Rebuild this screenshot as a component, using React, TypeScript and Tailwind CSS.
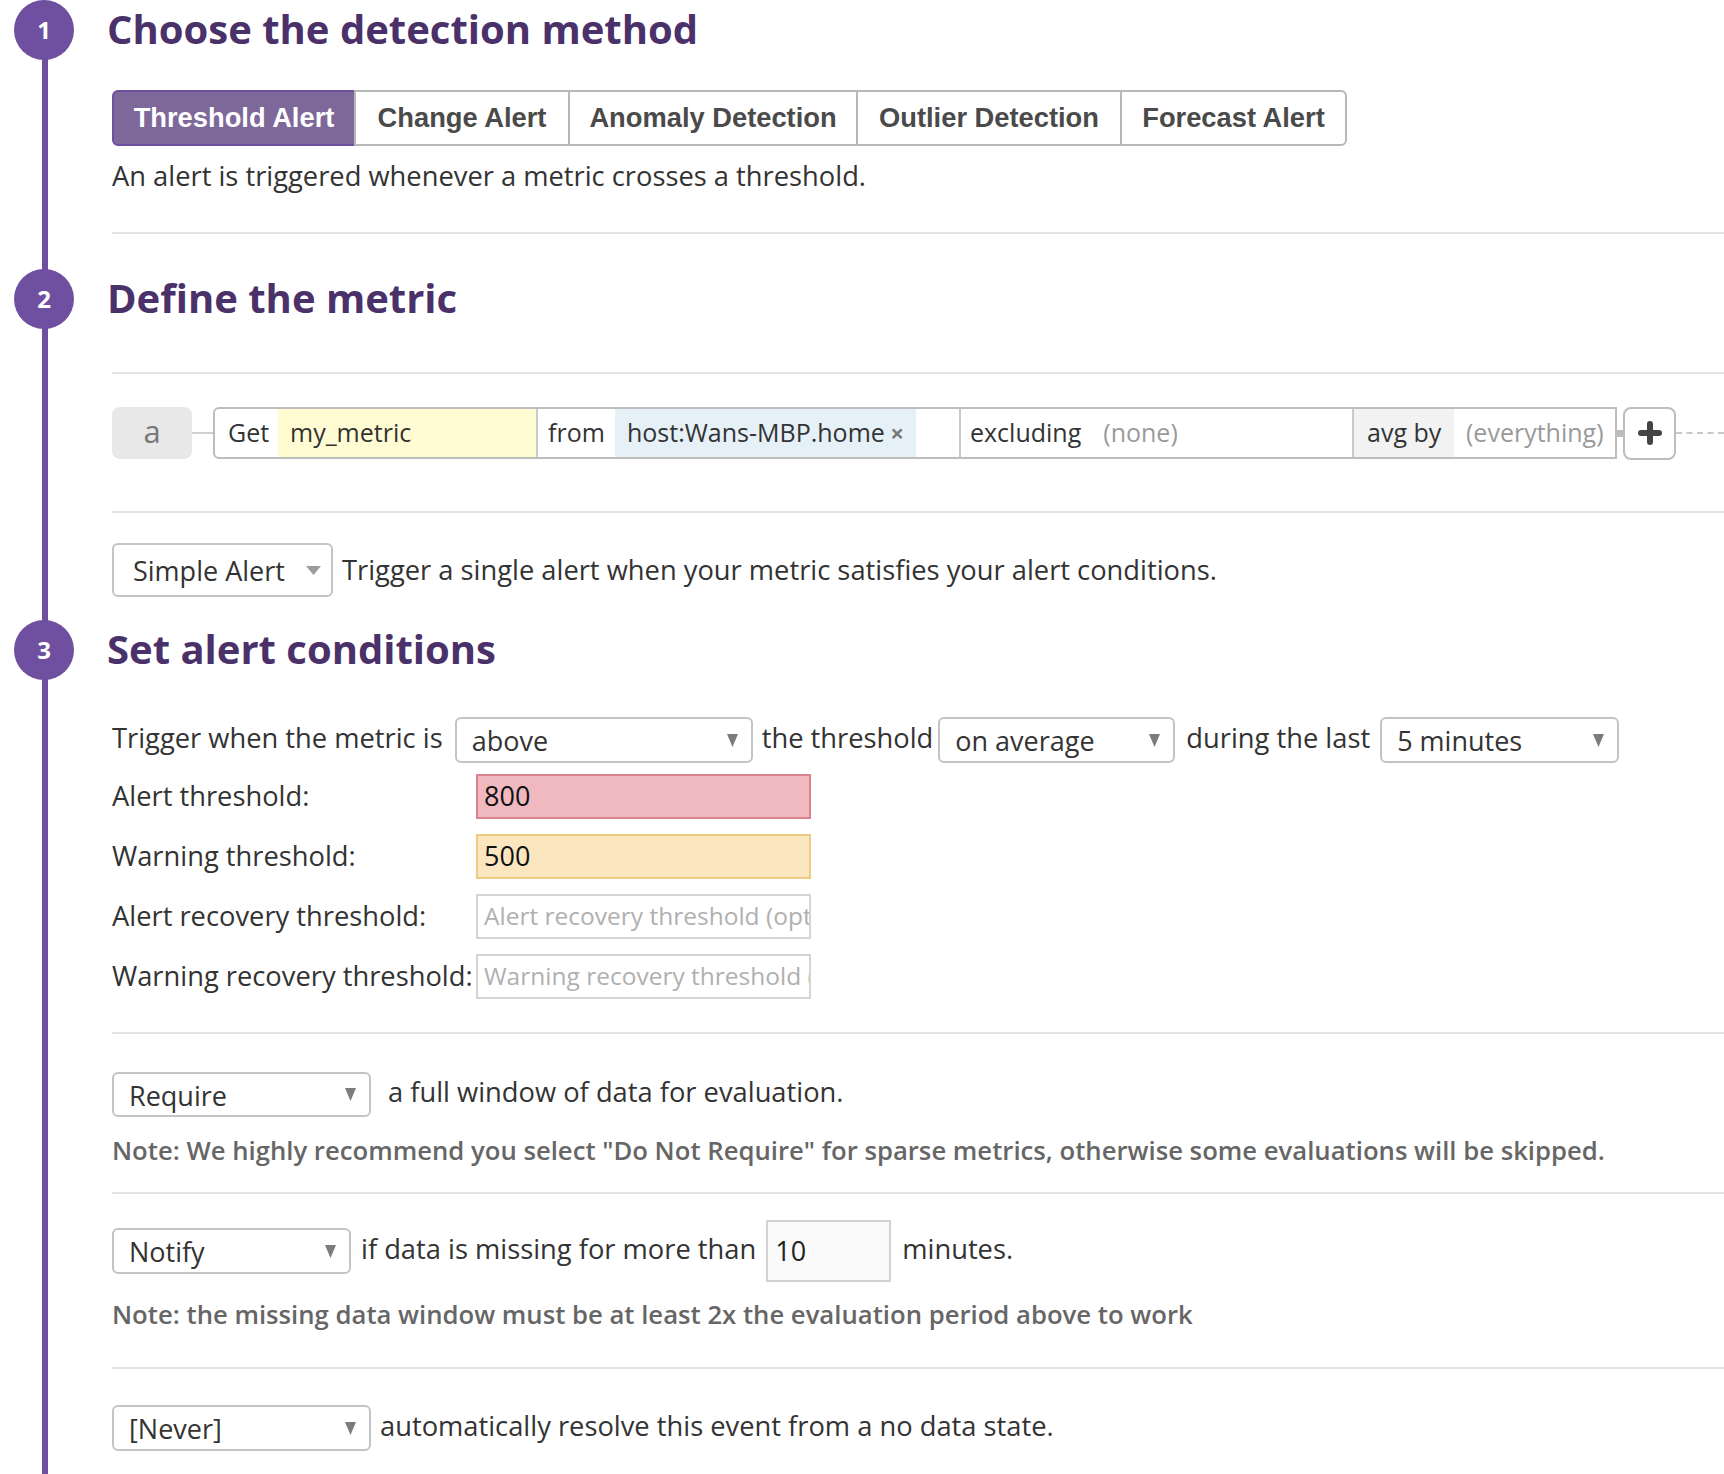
import React from "react"

function Caret({ light }: { light?: boolean }) {
    if (light) {
        return (
            <svg width="15" height="9" viewBox="0 0 15 9">
                <polygon points="0,0 15,0 7.5,9" fill="#9d9d9d" />
            </svg>
        )
    }
    return (
        <svg width="11" height="13" viewBox="0 0 11 13">
            <polygon points="0,0 11,0 5.5,13" fill="#7c7c7c" />
        </svg>
    )
}

function Select({ value, className }: { value: string; className: string }) {
    return (
        <div className={`flex shrink-0 items-center justify-between rounded-[6px] border-2 border-[#c4c4c4] bg-white pl-[15px] pr-[13px] text-[27px] text-[#333] ${className}`}>
            <span className="pt-[3px]">{value}</span>
            <Caret />
        </div>
    )
}

function Step({ n, title, className }: { n: number; title: string; className: string }) {
    return (
        <div className={`flex h-[60px] items-center ${className}`}>
            <div className="relative z-10 ml-[14px] flex h-[60px] w-[60px] shrink-0 items-center justify-center rounded-full bg-[#6f4f9f] text-[24px] font-bold text-white">
                {n}
            </div>
            <h2 className="ml-[33px] -mt-[2px] text-[40px] font-bold leading-none text-[#4b3169]">{title}</h2>
        </div>
    )
}

function Divider({ className }: { className: string }) {
    return <div className={`ml-[112px] h-[2px] bg-[#e2e2e2] ${className}`} />
}

const tabs = [
    { label: "Threshold Alert", w: "w-[244px]" },
    { label: "Change Alert", w: "w-[216px]" },
    { label: "Anomaly Detection", w: "w-[290px]" },
    { label: "Outlier Detection", w: "w-[266px]" },
    { label: "Forecast Alert", w: "w-[227px]" },
]

const thresholds = [
    { label: "Alert threshold:", value: "800", box: "border-[#d8838d] bg-[#f0b9bf]" },
    { label: "Warning threshold:", value: "500", box: "border-[#eecb83] bg-[#fce6c0]" },
    { label: "Alert recovery threshold:", placeholder: "Alert recovery threshold (optional)", box: "border-[#d4d4d4] bg-white" },
    { label: "Warning recovery threshold:", placeholder: "Warning recovery threshold (optional)", box: "border-[#d4d4d4] bg-white" },
]

export default function App() {
    return (
        <div className="relative min-h-screen overflow-hidden bg-white pb-[20px] font-['Open_Sans',sans-serif] text-[27.3px] text-[#333]">
            {/* timeline rail behind the step badges */}
            <div className="absolute bottom-0 left-[42px] top-[30px] w-[6px] bg-[#6f4f9f]" />

            {/* 1 */}
            <Step n={1} title="Choose the detection method" className="" />
            <div className="ml-[112px] mt-[30px] flex font-['Liberation_Sans',Arial,sans-serif] text-[27.3px] font-bold">
                {tabs.map((t, i) =>
                    i === 0 ? (
                        <div key={t.label} className={`flex h-[56px] items-center justify-center rounded-l-[6px] border-2 border-[#6c509d] bg-[#7e6799] text-white ${t.w}`}>
                            {t.label}
                        </div>
                    ) : (
                        <div
                            key={t.label}
                            className={`-ml-[2px] flex h-[56px] items-center justify-center border-2 border-[#b7b7b7] bg-white text-[#4a4a4a] ${t.w} ${i === tabs.length - 1 ? "rounded-r-[6px]" : ""}`}
                        >
                            {t.label}
                        </div>
                    )
                )}
            </div>
            <p className="ml-[112px] mt-[14px] leading-[32px]">An alert is triggered whenever a metric crosses a threshold.</p>
            <Divider className="mt-[40px]" />

            {/* 2 */}
            <Step n={2} title="Define the metric" className="mt-[35px]" />
            <Divider className="mt-[43px]" />

            <div className="ml-[112px] mt-[33px] flex h-[52px] items-center text-[25px]">
                <div className="flex h-[52px] w-[80px] items-center justify-center rounded-[8px] bg-[#e8e8e8] pb-[3px] text-[31px] text-[#777]">a</div>
                <div className="h-[2px] w-[21px] bg-[#cfcfcf]" />
                <div className="flex h-[52px] w-[1404px] items-stretch rounded-l-[6px] border-2 border-[#bdbdbd] bg-white">
                    <div className="flex w-[63px] items-center pl-[13px]">Get</div>
                    <div className="flex w-[258px] items-center bg-[#fffcd4] pl-[12px]">my_metric</div>
                    <div className="w-[2px] bg-[#c9c9c9]" />
                    <div className="flex w-[77px] items-center pl-[10px]">from</div>
                    <div className="flex w-[301px] items-center justify-between bg-[#e6f0f7] pl-[12px] pr-[12px]">
                        <span>host:Wans-MBP.home</span>
                        <span className="text-[24px] font-bold text-[#7a7a7a]">×</span>
                    </div>
                    <div className="w-[43px]" />
                    <div className="w-[2px] bg-[#c9c9c9]" />
                    <div className="flex w-[391px] items-center pl-[9px]">
                        excluding<span className="ml-[22px] text-[#9a9a9a]">(none)</span>
                    </div>
                    <div className="w-[2px] bg-[#c9c9c9]" />
                    <div className="flex w-[100px] items-center bg-[#f2f2f2] pl-[13px]">avg by</div>
                    <div className="flex flex-1 items-center pl-[12px] text-[#9a9a9a]">(everything)</div>
                </div>
                <div className="h-[7px] w-[6px] bg-[#bdbdbd]" />
                <div className="flex h-[53px] w-[53px] items-center justify-center rounded-[8px] border-2 border-[#bdbdbd] bg-white">
                    <svg width="24" height="24" viewBox="0 0 24 24">
                        <path d="M12 3v18M3 12h18" stroke="#444" strokeWidth="6" strokeLinecap="round" />
                    </svg>
                </div>
                <div className="flex-1 border-t-2 border-dashed border-[#c8c8c8]" />
            </div>
            <Divider className="mt-[52px]" />

            <div className="ml-[112px] mt-[30px] flex items-center">
                <div className="flex h-[54px] w-[221px] items-center justify-between rounded-[6px] border-2 border-[#c4c4c4] bg-white pl-[19px] pr-[10px]">
                    <span className="pt-[2px] text-[27px]">Simple Alert</span>
                    <Caret light />
                </div>
                <span className="ml-[9px]">Trigger a single alert when your metric satisfies your alert conditions.</span>
            </div>

            {/* 3 */}
            <Step n={3} title="Set alert conditions" className="mt-[23px]" />

            <div className="ml-[112px] mt-[37px] flex h-[46px] items-center whitespace-nowrap">
                <span className="-mt-[4px]">Trigger when the metric is</span>
                <Select value="above" className="ml-[12px] h-[46px] w-[298px]" />
                <span className="-mt-[4px] ml-[9px]">the threshold</span>
                <Select value="on average" className="ml-[5px] h-[46px] w-[237px]" />
                <span className="-mt-[4px] ml-[11px]">during the last</span>
                <Select value="5 minutes" className="ml-[10px] h-[46px] w-[239px]" />
            </div>

            <div className="ml-[112px] mt-[11px] grid grid-cols-[364px_335px] gap-y-[15px]">
                {thresholds.map((t) => (
                    <React.Fragment key={t.label}>
                        <div className="flex h-[45px] items-center whitespace-nowrap">{t.label}</div>
                        <div className={`flex h-[45px] items-center overflow-hidden whitespace-nowrap border-2 px-[6px] ${t.box}`}>
                            {t.value ? (
                                <span className="text-[27px] text-[#111]">{t.value}</span>
                            ) : (
                                <span className="text-[24.5px] text-[#b0b0b0]">{t.placeholder}</span>
                            )}
                        </div>
                    </React.Fragment>
                ))}
            </div>
            <Divider className="mt-[33px]" />

            <div className="ml-[112px] mt-[38px] flex h-[45px] items-center">
                <Select value="Require" className="h-[45px] w-[259px]" />
                <span className="-mt-[4px] ml-[17px]">a full window of data for evaluation.</span>
            </div>
            <p className="ml-[112px] mt-[19px] text-[25.7px] font-semibold leading-[30px] text-[#666]">
                Note: We highly recommend you select "Do Not Require" for sparse metrics, otherwise some evaluations will be skipped.
            </p>
            <Divider className="mt-[26px]" />

            <div className="ml-[112px] mt-[26px] flex h-[62px] items-center">
                <Select value="Notify" className="h-[46px] w-[239px]" />
                <span className="-mt-[4px] ml-[10px]">if data is missing for more than</span>
                <div className="ml-[10px] flex h-[62px] w-[125px] items-center border-2 border-[#d2d2d2] bg-[#fafafa] pl-[7px] text-[27px] text-[#222]">10</div>
                <span className="-mt-[4px] ml-[11px]">minutes.</span>
            </div>
            <p className="ml-[112px] mt-[18px] text-[25.7px] font-semibold leading-[30px] text-[#666]">
                Note: the missing data window must be at least 2x the evaluation period above to work
            </p>
            <Divider className="mt-[37px]" />

            <div className="ml-[112px] mt-[36px] flex h-[46px] items-center">
                <Select value="[Never]" className="h-[46px] w-[259px]" />
                <span className="-mt-[4px] ml-[9px]">automatically resolve this event from a no data state.</span>
            </div>
        </div>
    )
}
